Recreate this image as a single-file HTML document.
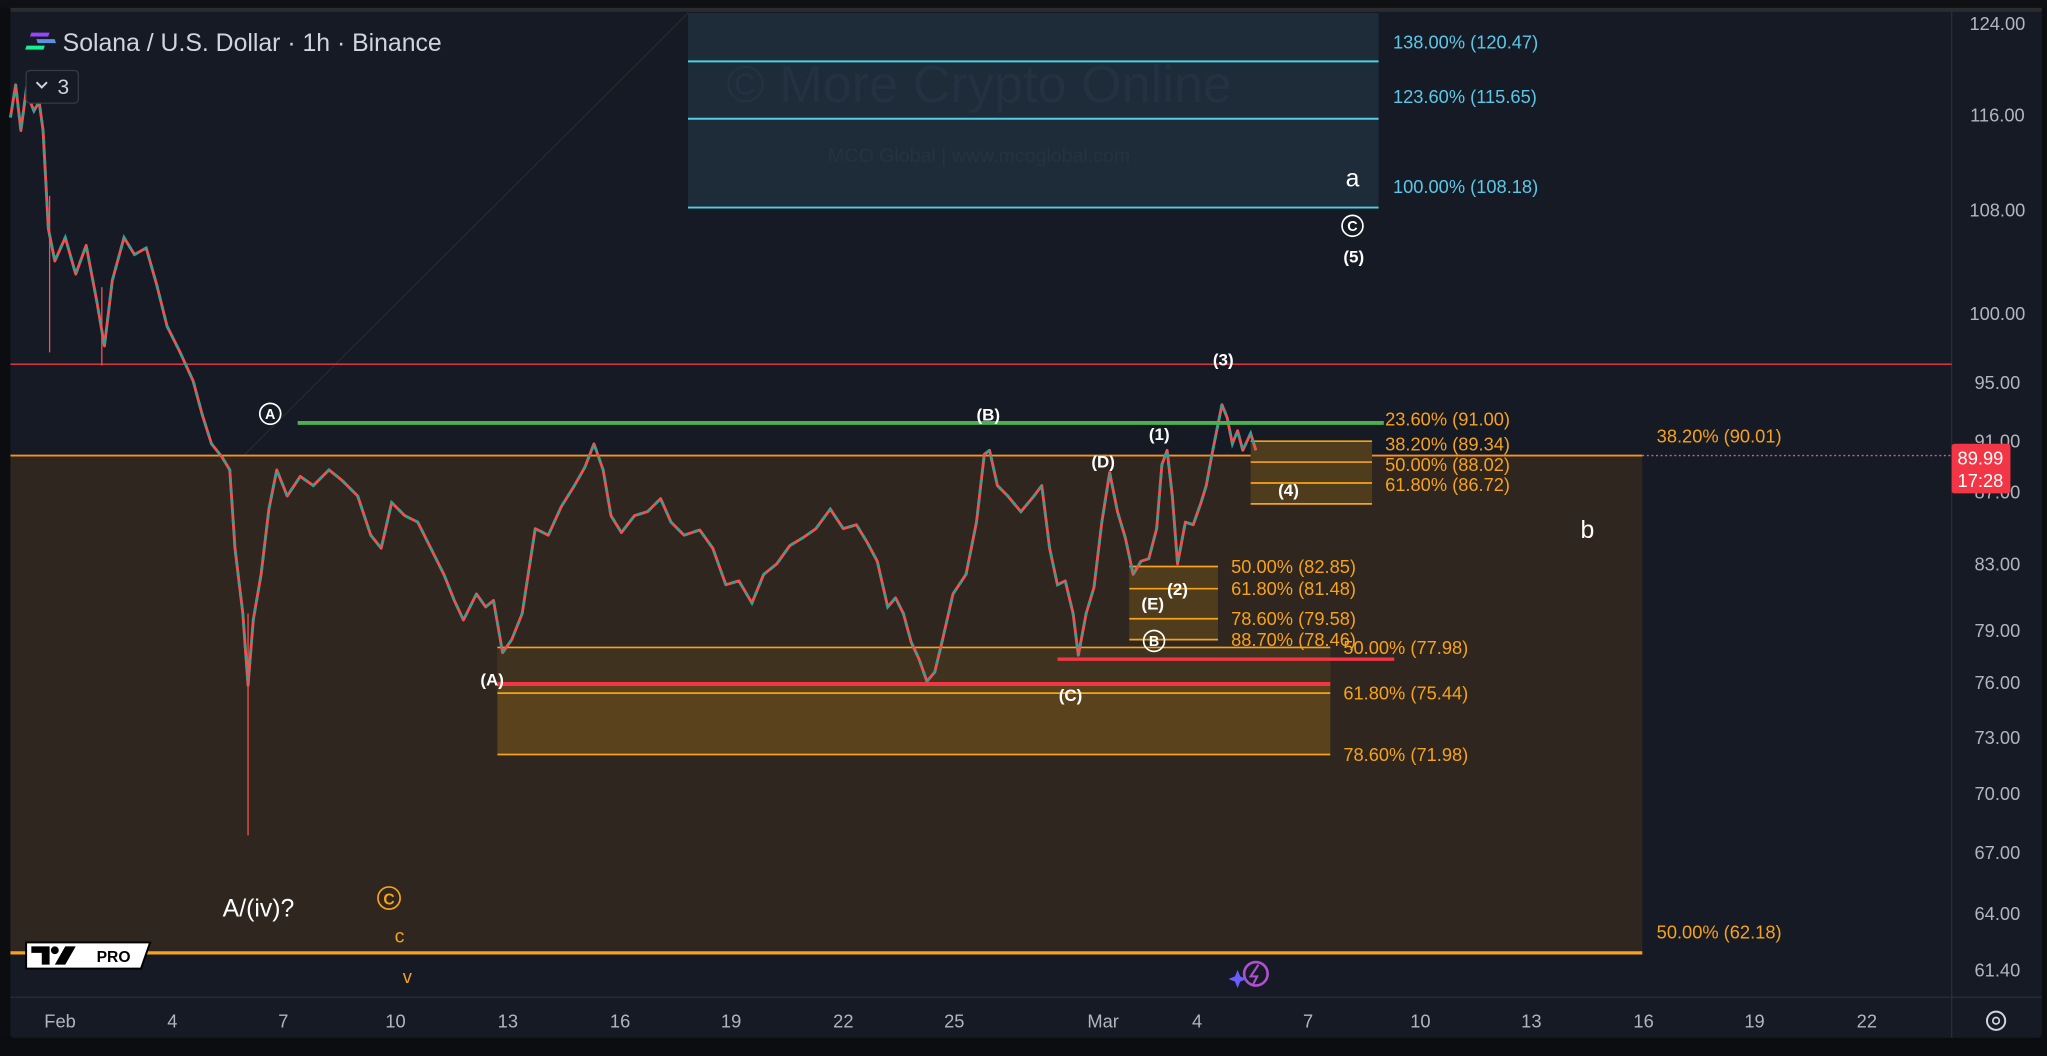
<!DOCTYPE html>
<html><head><meta charset="utf-8"><style>
html,body{margin:0;padding:0;background:#0c0d10;overflow:hidden}
svg{display:block}
text{font-family:"Liberation Sans","DejaVu Sans",sans-serif}
</style></head><body>
<svg width="2047" height="1056" viewBox="0 0 1568 809" preserveAspectRatio="none" xmlns="http://www.w3.org/2000/svg">
<rect x="0" y="0" width="1568" height="809" fill="#0c0d10"/>
<rect x="8" y="8" width="1556" height="787" fill="#161a25" rx="3"/>
<rect x="0" y="0" width="1568" height="6" fill="#0f1013"/>
<rect x="8" y="6" width="1556" height="3" fill="#2a2c30"/>
<line x1="1495" y1="8" x2="1495" y2="795" stroke="#2a2e39" stroke-width="1"/>
<line x1="8" y1="764" x2="1564" y2="764" stroke="#2a2e39" stroke-width="1"/>
<rect x="0" y="796" width="1568" height="13" fill="#0c0d10"/>

<line x1="8" y1="527" x2="527" y2="10" stroke="#2b2c30" stroke-width="0.8"/>

<rect x="527" y="10" width="529" height="149" fill="#1e2c3a"/>
<line x1="527" y1="47" x2="1056" y2="47" stroke="#4dd0e1" stroke-width="1.5"/>
<line x1="527" y1="91" x2="1056" y2="91" stroke="#4dd0e1" stroke-width="1.5"/>
<line x1="527" y1="159" x2="1056" y2="159" stroke="#4dd0e1" stroke-width="1.5"/>
<text x="750" y="78" font-size="40" fill="#233140" text-anchor="middle">© More Crypto Online</text>
<text x="750" y="124" font-size="15" fill="#25323f" text-anchor="middle">MCO Global  |  www.mcoglobal.com</text>
<g font-size="14" fill="#5ac8e8">
<text x="1067" y="37">138.00% (120.47)</text>
<text x="1067" y="79">123.60% (115.65)</text>
<text x="1067" y="148">100.00% (108.18)</text>
</g>

<line x1="8" y1="279" x2="1495" y2="279" stroke="#f23645" stroke-width="1"/>

<rect x="8" y="349" width="1250" height="381" fill="#2e261f"/>
<line x1="8" y1="349" x2="1258" y2="349" stroke="#f7931a" stroke-width="1.5"/>
<line x1="8" y1="730" x2="1258" y2="730" stroke="#f7a21a" stroke-width="2.5"/>
<line x1="1258" y1="349" x2="1495" y2="349" stroke="#d05a9a" stroke-width="1" stroke-dasharray="1.5,2"/>

<rect x="381" y="496" width="638" height="82" fill="#5a421c"/>
<rect x="381" y="496" width="638" height="28" fill="#3f321e"/>
<line x1="381" y1="496" x2="1019" y2="496" stroke="#f7a21a" stroke-width="1.3"/>
<line x1="381" y1="531" x2="1019" y2="531" stroke="#f7a21a" stroke-width="1.3"/>
<line x1="381" y1="578" x2="1019" y2="578" stroke="#f7a21a" stroke-width="1.3"/>

<rect x="865" y="434" width="68" height="56" fill="#4f3c1c"/>
<g stroke="#f7a21a" stroke-width="1.3">
<line x1="865" y1="434" x2="933" y2="434"/><line x1="865" y1="451" x2="933" y2="451"/>
<line x1="865" y1="474" x2="933" y2="474"/><line x1="865" y1="490" x2="933" y2="490"/>
</g>
<rect x="958" y="338" width="93" height="48" fill="#4f3c1c"/>
<g stroke="#f7a21a" stroke-width="1.3">
<line x1="958" y1="338" x2="1051" y2="338"/><line x1="958" y1="354" x2="1051" y2="354"/>
<line x1="958" y1="370" x2="1051" y2="370"/><line x1="958" y1="386" x2="1051" y2="386"/>
</g>

<polyline fill="none" stroke="#ef5350" stroke-width="2.2" stroke-linejoin="round" points="8,90 12,65 16,100 20,70 26,85 30,78 33,100 37,175 42,200 50,182 58,210 66,188 74,230 80,265 86,215 95,182 103,195 112,190 120,218 128,250 138,270 148,292 155,318 162,340 170,350 176,360 180,420 186,470 190,525 194,475 200,440 206,390 212,360 220,380 230,365 240,372 252,360 262,368 274,380 284,410 292,420 300,385 310,395 320,400 330,420 340,440 348,460 355,475 365,455 372,465 378,460 385,500 392,490 400,470 410,405 420,410 430,388 440,372 448,358 455,340 462,360 468,395 476,408 486,395 496,392 506,382 514,400 524,410 536,406 546,420 556,448 566,445 576,462 585,440 595,432 605,418 615,412 625,405 636,390 646,405 656,402 664,415 672,430 680,465 686,458 692,470 698,492 704,505 710,522 716,515 722,490 730,455 740,440 748,400 754,348 758,345 764,372 772,380 782,392 792,380 798,372 804,420 810,448 816,445 822,470 826,502 832,470 838,450 844,400 850,362 856,392 862,412 868,440 874,430 880,428 886,405 890,356 894,345 898,380 902,432 908,400 914,402 920,385 924,372 928,350 932,330 936,310 940,320 944,340 948,330 952,345 958,332 962,345"/>
<polyline fill="none" stroke="#26a69a" stroke-width="2.2" stroke-dasharray="3,5" points="8,90 12,65 16,100 20,70 26,85 30,78 33,100 37,175 42,200 50,182 58,210 66,188 74,230 80,265 86,215 95,182 103,195 112,190 120,218 128,250 138,270 148,292 155,318 162,340 170,350 176,360 180,420 186,470 190,525 194,475 200,440 206,390 212,360 220,380 230,365 240,372 252,360 262,368 274,380 284,410 292,420 300,385 310,395 320,400 330,420 340,440 348,460 355,475 365,455 372,465 378,460 385,500 392,490 400,470 410,405 420,410 430,388 440,372 448,358 455,340 462,360 468,395 476,408 486,395 496,392 506,382 514,400 524,410 536,406 546,420 556,448 566,445 576,462 585,440 595,432 605,418 615,412 625,405 636,390 646,405 656,402 664,415 672,430 680,465 686,458 692,470 698,492 704,505 710,522 716,515 722,490 730,455 740,440 748,400 754,348 758,345 764,372 772,380 782,392 792,380 798,372 804,420 810,448 816,445 822,470 826,502 832,470 838,450 844,400 850,362 856,392 862,412 868,440 874,430 880,428 886,405 890,356 894,345 898,380 902,432 908,400 914,402 920,385 924,372 928,350 932,330 936,310 940,320 944,340 948,330 952,345 958,332 962,345"/>
<line x1="190" y1="470" x2="190" y2="640" stroke="#ef5350" stroke-width="1"/>
<line x1="38" y1="150" x2="38" y2="270" stroke="#ef5350" stroke-width="1"/>
<line x1="78" y1="220" x2="78" y2="280" stroke="#ef5350" stroke-width="1"/>

<line x1="228" y1="324" x2="1060" y2="324" stroke="#4caf50" stroke-width="3"/>
<line x1="381" y1="524" x2="1019" y2="524" stroke="#f23645" stroke-width="3"/>
<line x1="810" y1="505" x2="1068" y2="505" stroke="#f23645" stroke-width="2.5"/>

<g font-size="14" fill="#f7a21a">
<text x="1061" y="326">23.60% (91.00)</text>
<text x="1061" y="345">38.20% (89.34)</text>
<text x="1061" y="361">50.00% (88.02)</text>
<text x="1061" y="376">61.80% (86.72)</text>
<text x="943" y="439">50.00% (82.85)</text>
<text x="943" y="456">61.80% (81.48)</text>
<text x="943" y="479">78.60% (79.58)</text>
<text x="943" y="495">88.70% (78.46)</text>
<text x="1029" y="501">50.00% (77.98)</text>
<text x="1029" y="536">61.80% (75.44)</text>
<text x="1029" y="583">78.60% (71.98)</text>
<text x="1269" y="339">38.20% (90.01)</text>
<text x="1269" y="719">50.00% (62.18)</text>
</g>

<g font-size="13" fill="#ffffff" text-anchor="middle" font-weight="bold">
<text x="757" y="322">(B)</text>
<text x="845" y="358">(D)</text>
<text x="888" y="337">(1)</text>
<text x="937" y="280">(3)</text>
<text x="987" y="380">(4)</text>
<text x="902" y="456">(2)</text>
<text x="883" y="467">(E)</text>
<text x="377" y="525">(A)</text>
<text x="820" y="537">(C)</text>
<text x="1037" y="201">(5)</text>
</g>
<g fill="none" stroke="#fff" stroke-width="1.3">
<circle cx="207" cy="317" r="8"/><circle cx="884" cy="491" r="8"/><circle cx="1036" cy="173" r="8"/>
</g>
<g font-size="11" fill="#fff" text-anchor="middle" font-weight="bold">
<text x="207" y="321">A</text><text x="884" y="495">B</text><text x="1036" y="177">C</text>
</g>
<text x="1036" y="143" font-size="19" fill="#fff" text-anchor="middle">a</text>
<text x="1216" y="412" font-size="19" fill="#fff" text-anchor="middle">b</text>
<text x="198" y="702" font-size="19" fill="#fff" text-anchor="middle">A/(iv)?</text>
<circle cx="298" cy="688" r="8.5" fill="none" stroke="#f7a21a" stroke-width="1.3"/>
<text x="298" y="693" font-size="12" fill="#f7a21a" text-anchor="middle" font-weight="bold">C</text>
<text x="306" y="722" font-size="15" fill="#f7a21a" text-anchor="middle">c</text>
<text x="312" y="753" font-size="14" fill="#f7a21a" text-anchor="middle">v</text>

<g transform="translate(24,25)">
<rect x="0" y="0" width="14" height="3" fill="#9945ff" transform="skewX(-20)"/>
<rect x="2" y="5" width="14" height="3" fill="#5f8fe0" transform="skewX(20)"/>
<rect x="0" y="10" width="14" height="3" fill="#14f195" transform="skewX(-20)"/>
</g>
<text x="48" y="39" font-size="19" fill="#d1d4dc">Solana / U.S. Dollar · 1h · Binance</text>
<rect x="20" y="54" width="40" height="25" rx="3" fill="#161a25" stroke="#363a45"/>
<path d="M28 63 l4 4 l4 -4" fill="none" stroke="#d1d4dc" stroke-width="1.5"/>
<text x="44" y="72" font-size="16" fill="#d1d4dc">3</text>

<g transform="translate(20,722)">
<path d="M0 0 H95 L88 20 H0 Z" fill="#fff" stroke="#000" stroke-width="1.5"/>
<path d="M4 3 H18 V17 H12 V8 H4 Z" fill="#000"/>
<circle cx="22" cy="6" r="3" fill="#000"/>
<path d="M30 3 H38 L30 17 H22 Z" fill="#000"/>
<text x="54" y="15" font-size="12" font-weight="bold" fill="#000">PRO</text>
</g>
<circle cx="962" cy="746" r="9" fill="none" stroke="#b04fd0" stroke-width="2"/>
<path d="M964 739 L958 748 H963 L960 754" fill="none" stroke="#b04fd0" stroke-width="1.6"/>
<path d="M948 743 L950 748 L955 750 L950 752 L948 757 L946 752 L941 750 L946 748 Z" fill="#6a5cff"/>

<g font-size="14" fill="#b2b5be" text-anchor="middle">
<text x="1530" y="23">124.00</text>
<text x="1530" y="93">116.00</text>
<text x="1530" y="166">108.00</text>
<text x="1530" y="245">100.00</text>
<text x="1530" y="298">95.00</text>
<text x="1530" y="343">91.00</text>
<text x="1530" y="382">87.00</text>
<text x="1530" y="437">83.00</text>
<text x="1530" y="488">79.00</text>
<text x="1530" y="528">76.00</text>
<text x="1530" y="570">73.00</text>
<text x="1530" y="613">70.00</text>
<text x="1530" y="658">67.00</text>
<text x="1530" y="705">64.00</text>
<text x="1530" y="748">61.40</text>
</g>
<rect x="1495" y="340" width="45" height="38" fill="#f23645" rx="2"/>
<text x="1517" y="356" font-size="14" fill="#fff" text-anchor="middle">89.99</text>
<text x="1517" y="373" font-size="14" fill="#fff" text-anchor="middle">17:28</text>

<g font-size="14" fill="#b2b5be" text-anchor="middle">
<text x="46" y="787">Feb</text><text x="132" y="787">4</text><text x="217" y="787">7</text>
<text x="303" y="787">10</text><text x="389" y="787">13</text><text x="475" y="787">16</text>
<text x="560" y="787">19</text><text x="646" y="787">22</text><text x="731" y="787">25</text>
<text x="845" y="787">Mar</text><text x="917" y="787">4</text><text x="1002" y="787">7</text>
<text x="1088" y="787">10</text><text x="1173" y="787">13</text><text x="1259" y="787">16</text>
<text x="1344" y="787">19</text><text x="1430" y="787">22</text>
</g>
<circle cx="1529" cy="782" r="7" fill="none" stroke="#d1d4dc" stroke-width="1.5"/>
<circle cx="1529" cy="782" r="2.5" fill="none" stroke="#d1d4dc" stroke-width="1.3"/>
</svg>
</body></html>
